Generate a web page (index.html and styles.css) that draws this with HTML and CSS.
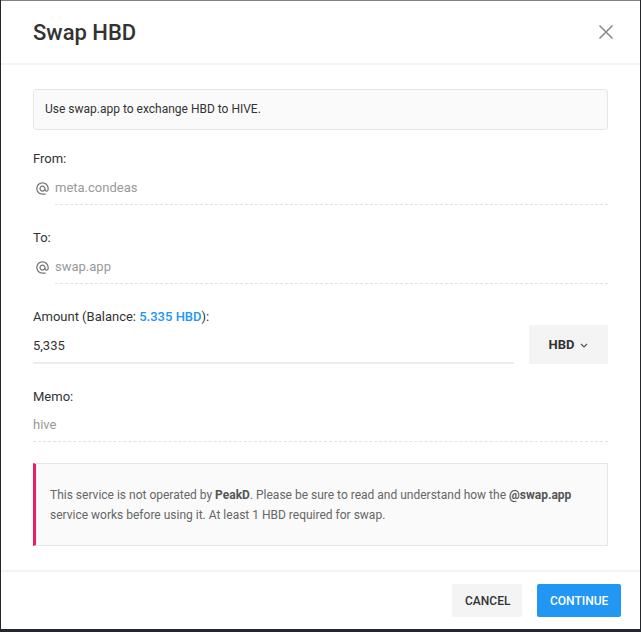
FILE: index.html
```html
<!DOCTYPE html>
<html>
<head>
<meta charset="utf-8">
<link rel="stylesheet" href="styles.css">
</head>
<body>
<div class="modal">
  <div class="header">
    <h1 class="title">Swap HBD</h1>
    <svg class="close" width="16" height="16" viewBox="0 0 16 16"><path d="M1.5 1.5 L14.5 14.5 M14.5 1.5 L1.5 14.5" stroke="#8a8a8a" stroke-width="1.6" fill="none"/></svg>
  </div>
  <div class="content">
    <div class="info">Use swap.app to exchange HBD to HIVE.</div>

    <div class="label first">From:</div>
    <div class="value"><svg class="at" width="15" height="15" viewBox="0 0 24 24"><path fill="#757575" d="M12 2C6.48 2 2 6.48 2 12s4.48 10 10 10h5v-2h-5c-4.34 0-8-3.66-8-8s3.66-8 8-8 8 3.66 8 8v1.43c0 .79-.71 1.57-1.5 1.57s-1.5-.78-1.5-1.57V12c0-2.76-2.24-5-5-5s-5 2.24-5 5 2.24 5 5 5c1.38 0 2.64-.56 3.54-1.47.65.89 1.77 1.47 2.96 1.47 1.97 0 3.5-1.6 3.5-3.57V12c0-5.52-4.48-10-10-10zm0 13c-1.66 0-3-1.34-3-3s1.34-3 3-3 3 1.34 3 3-1.34 3-3 3z"/></svg><span class="val-text">meta.condeas</span></div>

    <div class="label">To:</div>
    <div class="value"><svg class="at" width="15" height="15" viewBox="0 0 24 24"><path fill="#757575" d="M12 2C6.48 2 2 6.48 2 12s4.48 10 10 10h5v-2h-5c-4.34 0-8-3.66-8-8s3.66-8 8-8 8 3.66 8 8v1.43c0 .79-.71 1.57-1.5 1.57s-1.5-.78-1.5-1.57V12c0-2.76-2.24-5-5-5s-5 2.24-5 5 2.24 5 5 5c1.38 0 2.64-.56 3.54-1.47.65.89 1.77 1.47 2.96 1.47 1.97 0 3.5-1.6 3.5-3.57V12c0-5.52-4.48-10-10-10zm0 13c-1.66 0-3-1.34-3-3s1.34-3 3-3 3 1.34 3 3-1.34 3-3 3z"/></svg><span class="val-text">swap.app</span></div>

    <div class="label">Amount (Balance: <span class="balance">5.335 HBD</span>):</div>
    <div class="amount-row">
      <div class="amount-input">5,335</div>
      <div class="currency">HBD <svg class="chev" width="8" height="5" viewBox="0 0 8 5"><path d="M1 1 L4 4 L7 1" stroke="#555" stroke-width="1.2" fill="none"/></svg></div>
    </div>

    <div class="label">Memo:</div>
    <div class="value memo"><span class="val-text">hive</span></div>

    <div class="warning">This service is not operated by <b>PeakD</b>. Please be sure to read and understand how the <b>@swap.app</b> service works before using it. At least 1 HBD required for swap.</div>
  </div>
  <div class="footer">
    <button class="btn cancel">CANCEL</button>
    <button class="btn continue">CONTINUE</button>
  </div>
</div>
</body>
</html>
```

FILE: styles.css
```css
html, body {
  margin: 0;
  padding: 0;
}
body {
  background: #22272d;
  font-family: Roboto, "Liberation Sans", sans-serif;
  height: 632px;
  overflow: hidden;
}
.modal {
  margin-left: 1px;
  width: 639px;
  height: 628px;
  background: #fff;
  border-top: 1px solid #7c8288;
  display: flex;
  flex-direction: column;
}
.header {
  height: 62px;
  display: flex;
  align-items: center;
  justify-content: space-between;
  padding: 0 26px 0 32px;
  border-bottom: 2px solid #f3f3f3;
}
.title {
  margin: 0;
  font-size: 22px;
  font-weight: 500;
  color: #333;
}
.close {
  display: block;
}
.content {
  flex: 1;
  padding: 24px 32px 0 32px;
}
.info {
  height: 39px;
  border: 1px solid #e6e6e6;
  border-radius: 3px;
  background: #fafafa;
  font-size: 12px;
  color: #333;
  line-height: 39px;
  padding-left: 11px;
}
.label {
  font-size: 13px;
  line-height: 20px;
  color: #333;
  margin-top: 23px;
}
.label.first {
  margin-top: 19px;
}
.balance {
  color: #2196f3;
  font-weight: 500;
}
.value {
  margin-top: 9px;
  display: flex;
  align-items: flex-start;
  font-size: 13px;
  line-height: 20px;
  color: #999;
}
.value.memo {
  margin-top: 8px;
}
.at {
  display: block;
  flex: none;
  margin: 3px 5px 0 2px;
}
.val-text {
  flex: 1;
  border-bottom: 1px dashed #e2e2e2;
  padding-bottom: 6px;
}
.amount-row {
  display: flex;
  align-items: flex-end;
  gap: 15px;
  margin-top: -2px;
}
.amount-input {
  flex: 1;
  font-size: 13px;
  color: #333;
  line-height: 20px;
  padding-bottom: 6px;
  border-bottom: 2px solid #ececec;
}
.currency {
  width: 79px;
  height: 39px;
  background: #f4f4f4;
  border-radius: 2px;
  display: flex;
  align-items: center;
  justify-content: center;
  gap: 6px;
  font-size: 13px;
  font-weight: 700;
  color: #333;
}
.chev {
  display: block;
  margin-top: 1px;
}
.warning {
  margin-top: 21px;
  border: 1px solid #e6e6e6;
  border-left: 3px solid #e91e63;
  background: #fafafa;
  padding: 21px 20px 20px 14px;
  font-size: 12px;
  line-height: 20px;
  color: #666;
}
.warning b {
  color: #555;
  font-weight: 700;
}
.footer {
  border-top: 2px solid #f3f3f3;
  padding: 12px 19px 12px 0;
  display: flex;
  justify-content: flex-end;
  gap: 15px;
}
.btn {
  height: 33px;
  border: none;
  border-radius: 2px;
  font-family: Roboto, "Liberation Sans", sans-serif;
  font-size: 12px;
  font-weight: 500;
  padding: 0 13px;
}
.cancel {
  background: #f4f4f4;
  color: #333;
  width: 70px;
}
.continue {
  background: #2196f3;
  color: #fff;
  width: 84px;
}
```
